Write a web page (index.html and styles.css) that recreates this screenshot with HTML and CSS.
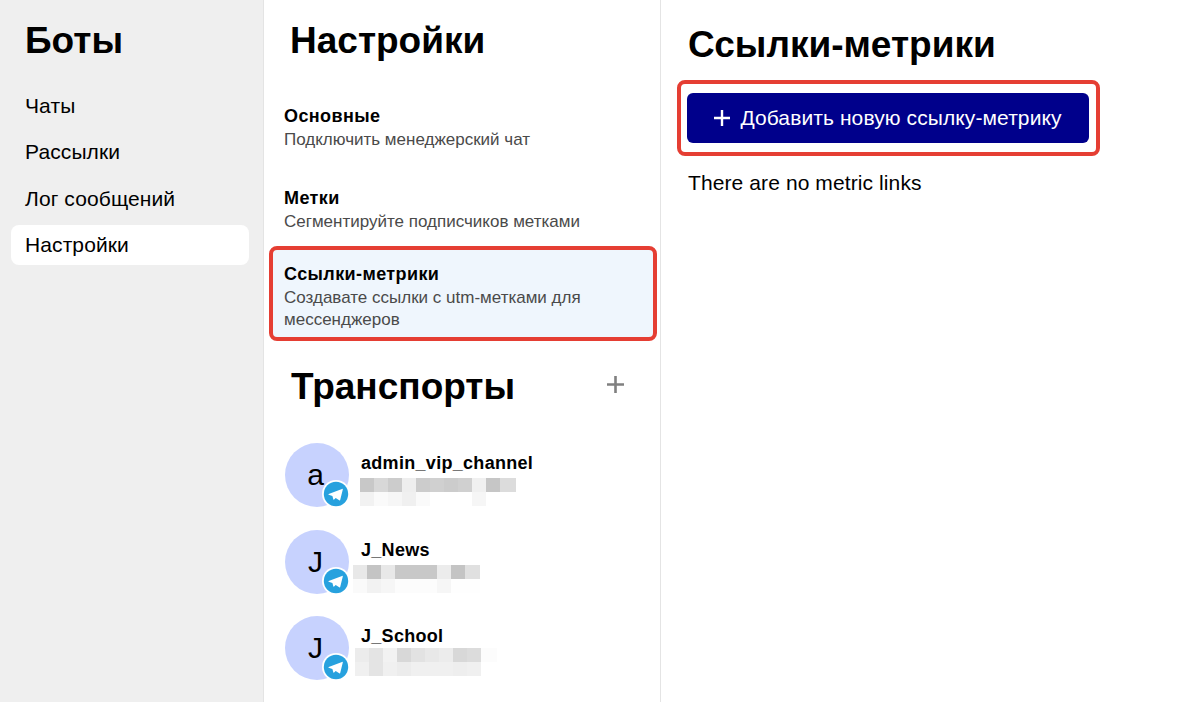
FILE: index.html
```html
<!DOCTYPE html>
<html lang="ru">
<head>
<meta charset="utf-8">
<title>Боты</title>
<link rel="stylesheet" href="styles.css">
</head>
<body>
<div class="app">
  <aside class="nav">
    <h1 class="nav-title">Боты</h1>
    <ul class="nav-list">
      <li class="nav-item">Чаты</li>
      <li class="nav-item">Рассылки</li>
      <li class="nav-item">Лог сообщений</li>
      <li class="nav-item active">Настройки</li>
    </ul>
  </aside>
  <section class="settings">
    <h2 class="settings-title">Настройки</h2>
    <div class="menu">
      <div class="menu-item">
        <div class="menu-name">Основные</div>
        <div class="menu-desc">Подключить менеджерский чат</div>
      </div>
      <div class="menu-item short">
        <div class="menu-name">Метки</div>
        <div class="menu-desc">Сегментируйте подписчиков метками</div>
      </div>
      <div class="menu-item selected">
        <div class="menu-name">Ссылки-метрики</div>
        <div class="menu-desc">Создавате ссылки с utm-метками для мессенджеров</div>
      </div>
    </div>
    <div class="transports-head">
      <h2 class="transports-title">Транспорты</h2>
      <svg class="add-icon" width="17" height="17" viewBox="0 0 17 17"><path d="M8.5 0v17M0 8.5h17" stroke="#808080" stroke-width="2.6" fill="none"/></svg>
    </div>
    <div class="transports">
      <div class="transport">
        <div class="avatar">a
          <svg class="tg" width="28" height="28" viewBox="0 0 28 28"><circle cx="14" cy="14" r="14" fill="#fff"/><circle cx="14" cy="14" r="12.2" fill="#27a1de"/><path d="M6.7 14L20 8.9c.5-.2.9.2.8.7l-2.6 10.3c-.1.5-.6.6-1 .4l-3.5-2.4-1.6 1.6c-.3.3-.7.2-.8-.2l-.9-3.3-3.7-1.2c-.5-.2-.5-.6 0-.8z" fill="#fff"/></svg>
        </div>
        <div class="transport-text">
          <div class="transport-name">admin_vip_channel</div>
          <svg class="blur blur-a" width="156" height="28" viewBox="0 0 156 28" shape-rendering="crispEdges">
            <rect x="0" width="14" height="14" fill="#c8c8c8"/><rect x="14" width="14" height="14" fill="#d8d8d8"/><rect x="28" width="14" height="14" fill="#cccccc"/><rect x="42" width="14" height="14" fill="#eeeeee"/><rect x="56" width="14" height="14" fill="#cccccc"/><rect x="70" width="14" height="14" fill="#d0d0d0"/><rect x="84" width="14" height="14" fill="#cccccc"/><rect x="98" width="14" height="14" fill="#d0d0d0"/><rect x="112" width="14" height="14" fill="#f0f0f0"/><rect x="126" width="14" height="14" fill="#c6c6c6"/><rect x="140" width="16" height="14" fill="#dcdcdc"/>
            <rect x="0" y="14" width="14" height="14" fill="#f2f2f2"/><rect x="14" y="14" width="14" height="14" fill="#fafafa"/><rect x="28" y="14" width="14" height="14" fill="#f6f6f6"/><rect x="42" y="14" width="14" height="14" fill="#f0f0f0"/><rect x="56" y="14" width="14" height="14" fill="#fafafa"/><rect x="112" y="14" width="14" height="14" fill="#f6f6f6"/>
          </svg>
        </div>
      </div>
      <div class="transport">
        <div class="avatar">J
          <svg class="tg" width="28" height="28" viewBox="0 0 28 28"><circle cx="14" cy="14" r="14" fill="#fff"/><circle cx="14" cy="14" r="12.2" fill="#27a1de"/><path d="M6.7 14L20 8.9c.5-.2.9.2.8.7l-2.6 10.3c-.1.5-.6.6-1 .4l-3.5-2.4-1.6 1.6c-.3.3-.7.2-.8-.2l-.9-3.3-3.7-1.2c-.5-.2-.5-.6 0-.8z" fill="#fff"/></svg>
        </div>
        <div class="transport-text">
          <div class="transport-name">J_News</div>
          <svg class="blur blur-b" width="127" height="28" viewBox="0 0 127 28" shape-rendering="crispEdges">
            <rect x="0" width="14" height="14" fill="#e8e8e8"/><rect x="14" width="14" height="14" fill="#c4c4c4"/><rect x="28" width="14" height="14" fill="#e8e8e8"/><rect x="42" width="42" height="14" fill="#c8c8c8"/><rect x="84" width="14" height="14" fill="#ececec"/><rect x="98" width="14" height="14" fill="#c4c4c4"/><rect x="112" width="15" height="14" fill="#e0e0e0"/>
            <rect x="0" y="14" width="14" height="14" fill="#fafafa"/><rect x="14" y="14" width="14" height="14" fill="#f2f2f2"/><rect x="28" y="14" width="14" height="14" fill="#f6f6f6"/><rect x="42" y="14" width="42" height="14" fill="#fcfcfc"/><rect x="84" y="14" width="14" height="14" fill="#f6f6f6"/><rect x="98" y="14" width="29" height="14" fill="#fefefe"/>
          </svg>
        </div>
      </div>
      <div class="transport">
        <div class="avatar">J
          <svg class="tg" width="28" height="28" viewBox="0 0 28 28"><circle cx="14" cy="14" r="14" fill="#fff"/><circle cx="14" cy="14" r="12.2" fill="#27a1de"/><path d="M6.7 14L20 8.9c.5-.2.9.2.8.7l-2.6 10.3c-.1.5-.6.6-1 .4l-3.5-2.4-1.6 1.6c-.3.3-.7.2-.8-.2l-.9-3.3-3.7-1.2c-.5-.2-.5-.6 0-.8z" fill="#fff"/></svg>
        </div>
        <div class="transport-text">
          <div class="transport-name">J_School</div>
          <svg class="blur blur-c" width="142" height="28" viewBox="0 0 142 28" shape-rendering="crispEdges">
            <rect x="0" width="14" height="14" fill="#ececec"/><rect x="14" width="14" height="14" fill="#e4e4e4"/><rect x="28" width="14" height="14" fill="#f2f2f2"/><rect x="42" width="14" height="14" fill="#d8d8d8"/><rect x="56" width="14" height="14" fill="#e2e2e2"/><rect x="70" width="14" height="14" fill="#e8e8e8"/><rect x="84" width="14" height="14" fill="#ececec"/><rect x="98" width="14" height="14" fill="#d8d8d8"/><rect x="112" width="14" height="14" fill="#dcdcdc"/><rect x="126" width="16" height="14" fill="#fcfcfc"/>
            <rect x="0" y="14" width="14" height="14" fill="#f0f0f0"/><rect x="14" y="14" width="14" height="14" fill="#e4e4e4"/><rect x="28" y="14" width="14" height="14" fill="#f0f0f0"/><rect x="42" y="14" width="14" height="14" fill="#ececec"/><rect x="56" y="14" width="42" height="14" fill="#f0f0f0"/><rect x="98" y="14" width="14" height="14" fill="#eeeeee"/><rect x="112" y="14" width="14" height="14" fill="#f0f0f0"/>
          </svg>
        </div>
      </div>
    </div>
  </section>
  <main class="content">
    <h2 class="content-title">Ссылки-метрики</h2>
    <div class="highlight">
      <button class="add-btn" type="button">
        <svg width="16" height="16" viewBox="0 0 16 16"><path d="M8 0v16M0 8h16" stroke="#fff" stroke-width="2.4" fill="none"/></svg>
        <span>Добавить новую ссылку-метрику</span>
      </button>
    </div>
    <p class="empty">There are no metric links</p>
  </main>
</div>
</body>
</html>
```
FILE: styles.css
```css
* { box-sizing: border-box; }
html, body { margin: 0; padding: 0; }
body { font-family: "Liberation Sans", Arial, sans-serif; color: #000; background: #fff; }
h1, h2, p, ul { margin: 0; padding: 0; }
ul { list-style: none; }

.app { display: flex; height: 702px; width: 1200px; overflow: hidden; }

.nav { width: 264px; flex: none; background: #efefef; border-right: 1px solid #e4e4e4; padding: 20px 14px 0 11px; }
.nav-title { font-size: 37px; line-height: 41px; font-weight: 700; padding-left: 14px; margin-bottom: 25px; }
.nav-list { display: flex; flex-direction: column; gap: 6.4px; }
.nav-item { height: 40px; line-height: 40px; font-size: 21px; letter-spacing: 0.1px; padding-left: 14px; border-radius: 8px; }
.nav-item.active { background: #fff; }

.settings { width: 397px; flex: none; border-right: 1px solid #e4e4e4; padding: 20px 3px 0 5px; }
.settings-title { font-size: 37px; line-height: 41px; font-weight: 700; padding-left: 21px; margin-bottom: 43px; }
.menu { display: flex; flex-direction: column; }
.menu-item { padding: 0 15px; height: 82px; }
.menu-item.short { height: 60px; }
.menu-item.selected { height: 95px; padding: 12px 11px 0; background: #eff6fd; border: 4px solid #e53e33; border-radius: 8px; }
.menu-name { font-size: 18px; letter-spacing: 0.4px; line-height: 25px; font-weight: 700; }
.menu-desc { font-size: 17px; line-height: 22px; color: #4a4a4a; }

.transports-head { display: flex; align-items: center; justify-content: space-between; margin-top: 23px; padding: 0 33px 0 22px; height: 44px; }
.transports-title { font-size: 37px; line-height: 41px; font-weight: 700; }
.add-icon { display: block; margin-bottom: 4px; }

.transports { display: flex; flex-direction: column; gap: 16.6px; margin-top: 35px; padding-left: 16px; }
.transport { display: flex; height: 70px; }
.avatar { position: relative; width: 64px; height: 64px; flex: none; padding-right: 3px; border-radius: 50%; background: #c7d2fe; font-size: 30px; line-height: 64px; text-align: center; }
.tg { position: absolute; right: -1px; bottom: -1px; display: block; }
.transport-text { margin-left: 12px; padding-top: 10px; }
.transport-name { font-size: 18px; letter-spacing: 0.3px; line-height: 21px; font-weight: 700; }
.blur { display: block; margin-top: 4px; }
.blur-a { margin-left: -1px; }
.blur-b { margin-left: -8px; }
.blur-c { margin-left: -6px; margin-top: 1px; }

.content { flex: 1; padding: 24px 0 0 16px; min-width: 0; }
.content-title { font-size: 37px; line-height: 41px; font-weight: 700; padding-left: 11px; }
.highlight { width: 423px; height: 76px; margin-top: 15px; padding: 9px 0 0 6px; border: 4px solid #e53e33; border-radius: 8px; }
.add-btn { display: flex; align-items: center; justify-content: center; gap: 10px; width: 402px; height: 50px; background: #00008b; color: #fff; border: 0; border-radius: 6px; font: 21px "Liberation Sans", Arial, sans-serif; letter-spacing: 0.1px; padding: 0; }
.empty { font-size: 21px; letter-spacing: 0.1px; line-height: 24px; margin: 15px 0 0 11px; }
```
